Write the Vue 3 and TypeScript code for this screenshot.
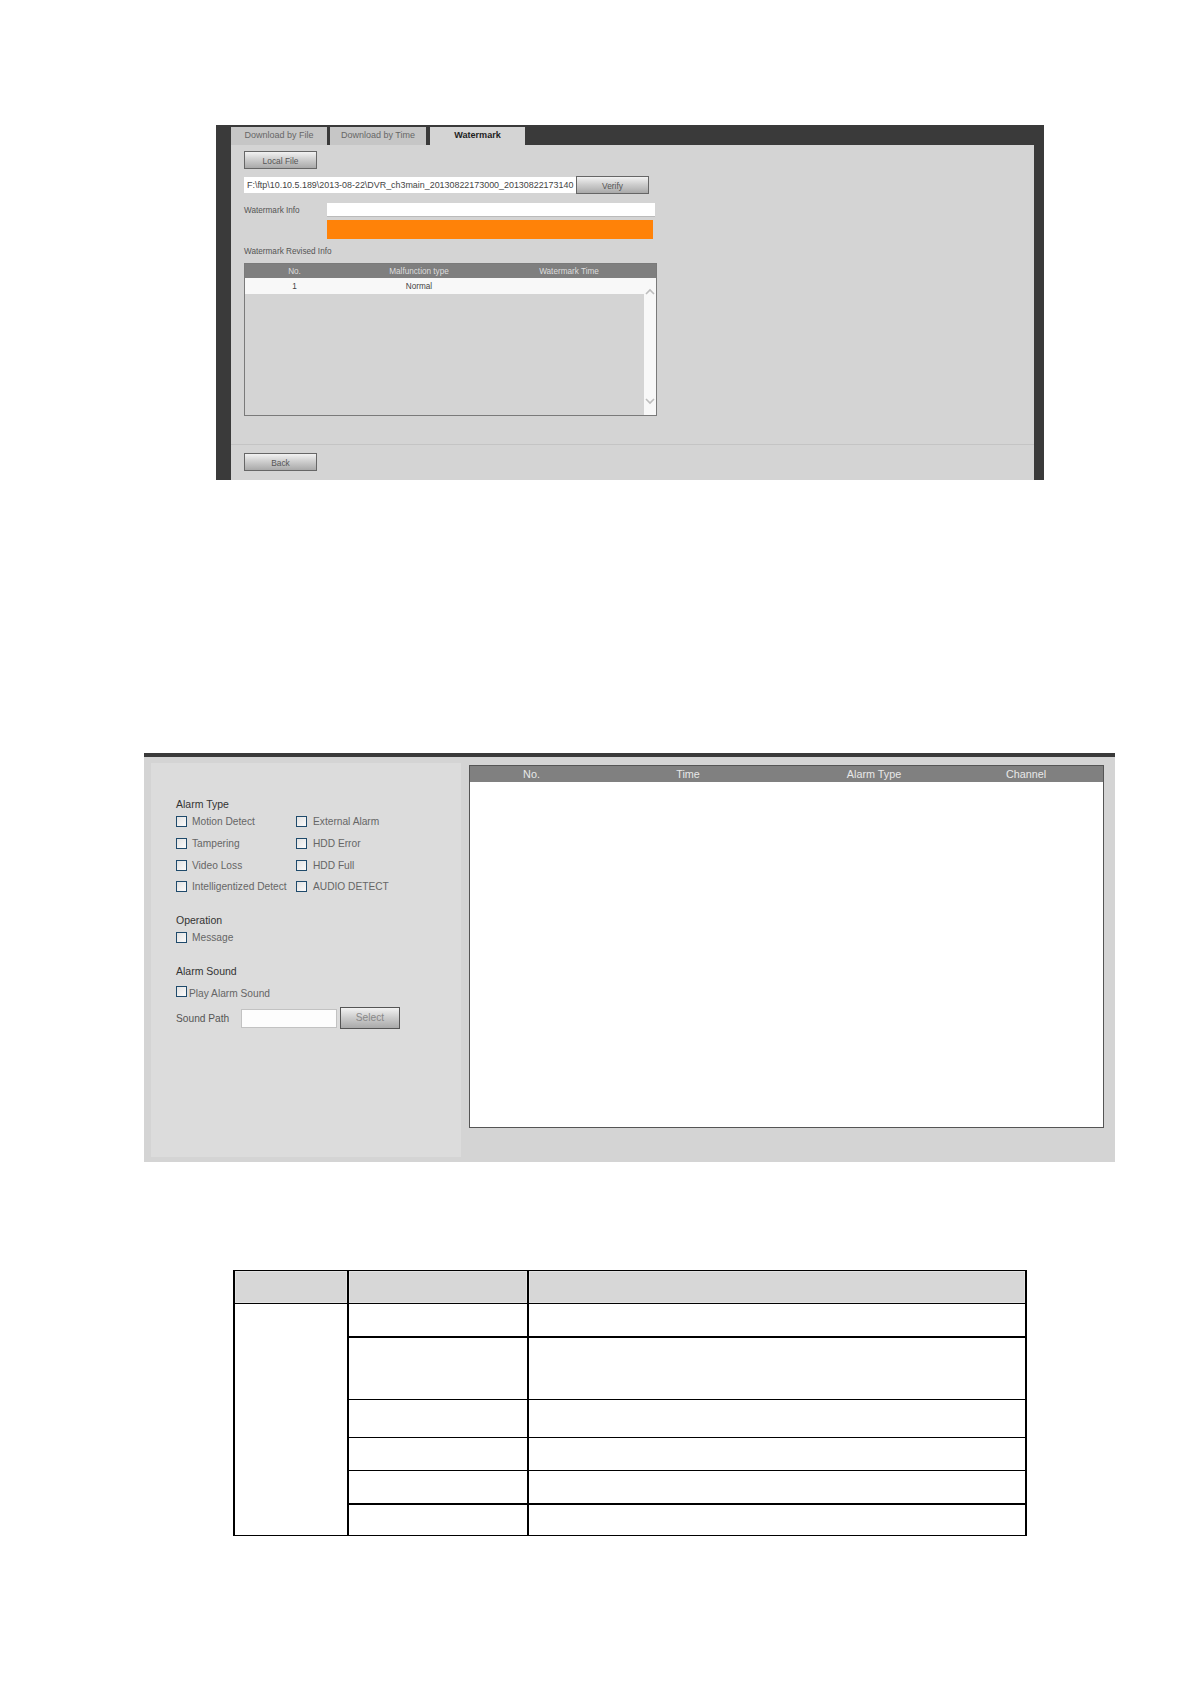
<script setup lang="ts">
const alarmRows: [string, string][] = [
  ['Motion Detect', 'External Alarm'],
  ['Tampering', 'HDD Error'],
  ['Video Loss', 'HDD Full'],
  ['Intelligentized Detect', 'AUDIO DETECT'],
]
const tableRows: { cls: string }[] = [
  { cls: 'r1' },
  { cls: 'r2' },
  { cls: 'r3' },
  { cls: 'r4' },
  { cls: 'r5' },
]
</script>

<template>
  <div class="page">
    <section class="wm">
      <div class="tabs">
        <div class="tab">Download by File</div>
        <div class="tab">Download by Time</div>
        <div class="tab active">Watermark</div>
      </div>
      <div class="wm-body">
        <button class="btn local">Local File</button>
        <div class="file-row">
          <div class="file">F:\ftp\10.10.5.189\2013-08-22\DVR_ch3main_20130822173000_20130822173140</div>
          <button class="btn verify">Verify</button>
        </div>
        <div class="info-row">
          <span class="info-label">Watermark Info</span>
          <div class="info-input"></div>
        </div>
        <div class="orange"></div>
        <div class="revised">Watermark Revised Info</div>
        <div class="wm-table">
          <div class="wm-head">
            <span>No.</span><span>Malfunction type</span><span>Watermark Time</span>
          </div>
          <div class="wm-main">
            <div class="wm-list">
              <div class="wm-row"><span>1</span><span>Normal</span><span></span></div>
            </div>
            <div class="scroll">
              <svg width="10" height="7" viewBox="0 0 10 7"><path d="M1 6 L5 2 L9 6" fill="none" stroke="#bdbdbd" stroke-width="1.6" /></svg>
              <svg width="10" height="7" viewBox="0 0 10 7"><path d="M1 1 L5 5 L9 1" fill="none" stroke="#bdbdbd" stroke-width="1.6" /></svg>
            </div>
          </div>
        </div>
        <div class="wm-foot">
          <button class="btn back">Back</button>
        </div>
      </div>
    </section>

    <section class="alarm">
      <div class="side">
        <div class="title">Alarm Type</div>
        <div class="check-grid">
          <template v-for="row in alarmRows" :key="row[0]">
            <label class="check"><i class="box"></i><span>{{ row[0] }}</span></label>
            <label class="check wide"><i class="box"></i><span>{{ row[1] }}</span></label>
          </template>
        </div>
        <div class="title op">Operation</div>
        <label class="check msg"><i class="box"></i><span>Message</span></label>
        <div class="title snd">Alarm Sound</div>
        <label class="check play"><i class="box up"></i><span>Play Alarm Sound</span></label>
        <div class="path-row">
          <span class="path-label">Sound Path</span>
          <div class="path-input"></div>
          <button class="btn select">Select</button>
        </div>
      </div>
      <div class="log">
        <div class="log-head">
          <span>No.</span><span>Time</span><span>Alarm Type</span><span>Channel</span>
        </div>
      </div>
    </section>

    <table class="desc">
      <colgroup>
        <col class="c1" /><col class="c2" /><col class="c3" />
      </colgroup>
      <tbody>
        <tr class="head"><th></th><th></th><th></th></tr>
        <tr class="r0"><td rowspan="6" class="span"></td><td class="thick"></td><td class="thick"></td></tr>
        <tr v-for="r in tableRows" :key="r.cls" :class="r.cls"><td></td><td></td></tr>
      </tbody>
    </table>
  </div>
</template>

<style>
html, body { margin: 0; background: #fff; }
</style>

<style scoped>
.page {
  width: 1190px;
  height: 1684px;
  overflow: hidden;
  padding-top: 125px;
  box-sizing: border-box;
  background: #fff;
  font-family: "Liberation Sans", Arial, sans-serif;
  color: #555;
}

/* buttons */
.btn {
  display: block;
  box-sizing: border-box;
  border: 1px solid #666;
  padding: 1px 0 0;
  background: linear-gradient(#f2f2f2, #cfcfcf 45%, #a9a9a9);
  color: #555;
  font: 8.4px "Liberation Sans", Arial, sans-serif;
}

/* watermark panel */
.wm {
  width: 828px;
  height: 355px;
  margin-left: 216px;
  box-sizing: border-box;
  border-left: 15px solid #3a3a3a;
  border-right: 10px solid #3a3a3a;
  background: #3a3a3a;
  display: flex;
  flex-direction: column;
}
.tabs {
  height: 20px;
  display: flex;
  align-items: flex-end;
  gap: 3px;
}
.tab {
  width: 96px;
  height: 18px;
  box-sizing: border-box;
  text-align: center;
  line-height: 16px;
  background: #c6c6c6;
  font-size: 9px;
  color: #666;
}
.tab.active {
  width: 95px;
  margin-left: 1px;
  background: #d4d4d4;
  color: #222;
  font-weight: bold;
  font-size: 9.1px;
}
.wm-body {
  flex: 1;
  background: #d4d4d4;
  padding: 6px 0 0 13px;
  display: flex;
  flex-direction: column;
  align-items: flex-start;
  font-size: 8.2px;
}
.local { width: 73px; height: 18px; }
.file-row {
  display: flex;
  align-items: center;
  margin-top: 7px;
  height: 18px;
}
.file {
  width: 332px;
  height: 16px;
  box-sizing: border-box;
  padding-left: 3px;
  background: #fff;
  color: #444;
  line-height: 16px;
  font-size: 8.92px;
  white-space: nowrap;
  overflow: hidden;
}
.verify { width: 73px; height: 18px; }
.info-row {
  display: flex;
  align-items: center;
  margin-top: 9px;
  height: 14px;
}
.info-label { width: 82.5px; }
.info-input {
  width: 328.5px;
  height: 14px;
  background: #fff;
  box-shadow: inset 0 -1px 0 #bbb;
}
.orange {
  width: 326px;
  height: 19px;
  margin: 3px 0 0 82.5px;
  background: #ff8208;
}
.revised {
  margin-top: 6px;
  height: 14px;
  line-height: 14px;
}
.wm-table {
  width: 413px;
  height: 153px;
  margin-top: 4px;
  box-sizing: border-box;
  border: 1px solid #7a7a7a;
  display: flex;
  flex-direction: column;
}
.wm-head, .wm-row {
  display: grid;
  grid-template-columns: 99px 150px 150px;
  text-align: center;
}
.wm-head {
  height: 14px;
  line-height: 15px;
  background: #7f7f7f;
  color: #ddd;
}
.wm-main { flex: 1; display: flex; }
.wm-list { flex: 1; }
.wm-row {
  height: 16px;
  line-height: 17px;
  background: #f8f8f8;
  color: #444;
}
.scroll {
  width: 12px;
  background: #f8f8f8;
  display: flex;
  flex-direction: column;
  justify-content: space-between;
  align-items: center;
  padding: 10px 0 10px;
  box-sizing: border-box;
}
.wm-foot {
  align-self: stretch;
  margin: 28px 0 0 -13px;
  padding: 8px 0 0 13px;
  border-top: 1px solid #c4c4c4;
}
.back { width: 73px; height: 18px; }

/* alarm panel */
.alarm {
  width: 971px;
  height: 409px;
  margin: 273px 0 0 144px;
  box-sizing: border-box;
  border-top: 4px solid #3a3a3a;
  background: #d4d4d4;
  padding: 6px 11px 5px 7px;
  display: flex;
  gap: 8px;
}
.side {
  width: 310px;
  box-sizing: border-box;
  background: #dcdcdc;
  padding: 34px 0 0 25px;
  font-size: 10.2px;
}
.title {
  height: 14px;
  line-height: 14px;
  color: #333;
  font-size: 10.5px;
}
.check-grid {
  display: grid;
  grid-template-columns: 120px auto;
  grid-auto-rows: 21.67px;
}
.check {
  display: flex;
  align-items: center;
  gap: 5px;
  color: #666;
}
.check.wide { gap: 6px; }
.box {
  width: 11px;
  height: 11px;
  box-sizing: border-box;
  border: 1px solid #1f4a6b;
  background: linear-gradient(135deg, #e2e2e2, #fbfbfb);
  flex: none;
}
.op { margin-top: 15px; }
.msg { height: 20px; margin-top: 1px; }
.snd { margin-top: 16px; }
.play { height: 20px; margin-top: 6px; gap: 2px; }
.box.up { margin-top: -5px; }
.path-row {
  display: flex;
  align-items: center;
  height: 22px;
  margin-top: 3px;
}
.path-label { width: 65px; color: #555; padding-top: 2px; }
.path-input {
  width: 96px;
  height: 19px;
  margin-top: 1px;
  box-sizing: border-box;
  background: #fdfdfd;
  border: 1px solid #c2c2c2;
}
.select {
  width: 60px;
  height: 22px;
  margin-left: 3px;
  padding: 0;
  font-size: 10.2px;
  color: #888;
  border-color: #555;
}
.log {
  width: 635px;
  height: 363px;
  margin-top: 2px;
  box-sizing: border-box;
  border: 1px solid #555;
  background: #fff;
}
.log-head {
  height: 16px;
  line-height: 16px;
  display: grid;
  grid-template-columns: 123px 190px 182px 122px;
  text-align: center;
  background: #808080;
  color: #e8e8e8;
  font-size: 10.8px;
}

/* description table */
.desc {
  width: 794px;
  margin: 108px 0 0 233px;
  border-collapse: collapse;
  table-layout: fixed;
}
.c1 { width: 114px; }
.c2 { width: 180px; }
.desc th, .desc td {
  padding: 0;
  border: 2px solid #000;
  border-top-width: 1px;
  border-bottom-width: 1px;
}
.desc th {
  background: #d7d7d7;
  box-shadow: inset 0 0 0 1px #e2e2e2;
}
.head { height: 33px; }
.r0 { height: 33px; }
.desc td.thick { border-bottom-width: 2px; }
.r1 { height: 63px; }
.r2 { height: 38px; }
.r3 { height: 33px; }
.r4 { height: 33px; }
.desc .r4 td { border-bottom-width: 2px; }
.r5 { height: 32px; }
</style>
